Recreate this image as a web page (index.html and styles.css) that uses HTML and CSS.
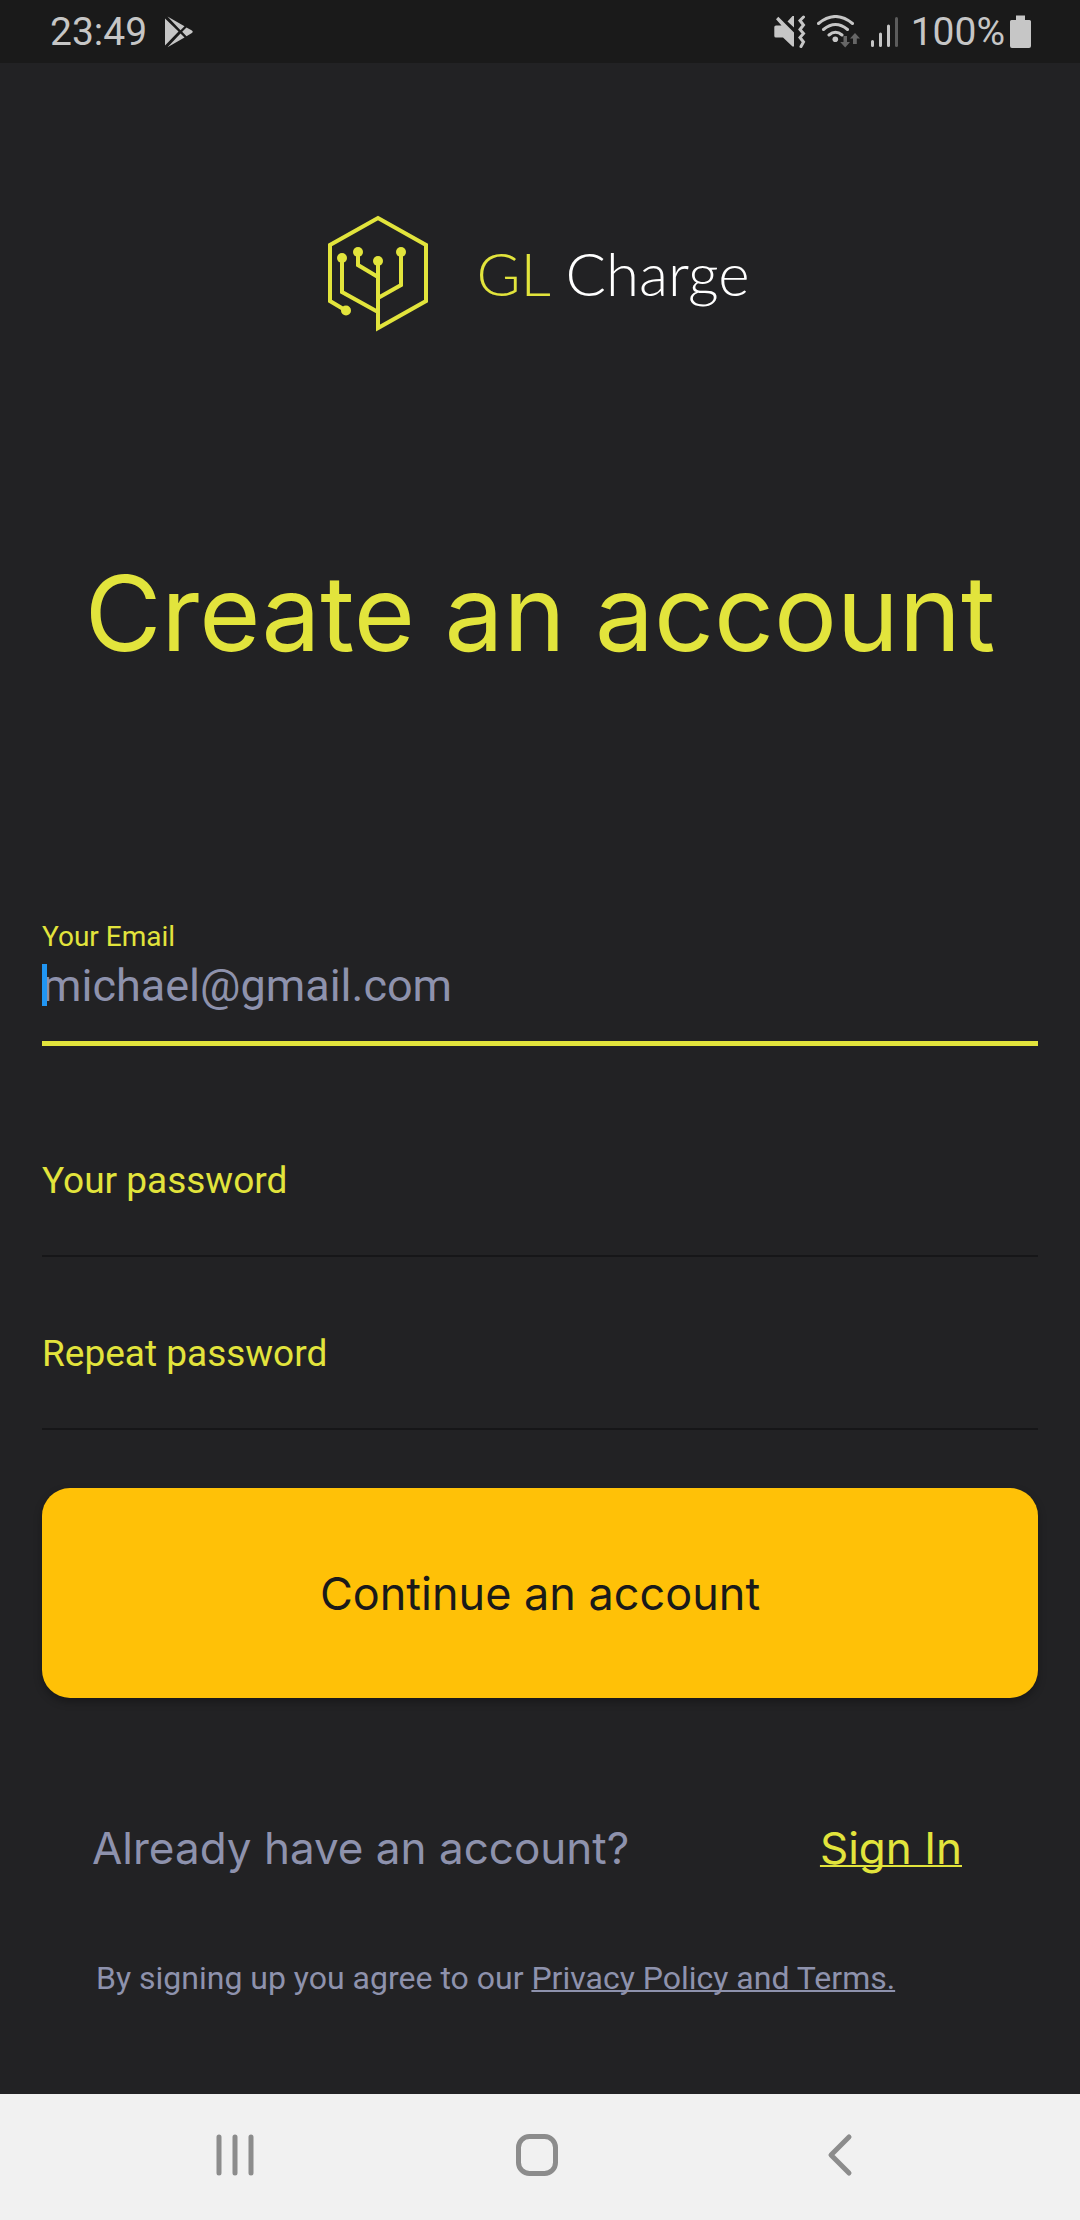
FILE: index.html
```html
<!DOCTYPE html>
<html lang="en">
<head>
<meta charset="utf-8">
<meta name="viewport" content="width=device-width, initial-scale=1">
<title>GL Charge – Create an account</title>
<link rel="stylesheet" href="styles.css">
</head>
<body>
<div class="screen">
  <header class="status">
    <div class="status-group status-left">
      <span>23:49</span>
      <svg class="play-icon" width="30" height="32" viewBox="164 15 30 32" aria-hidden="true">
        <path d="M165 17.500L178.500 30.500 165 44.500ZM167.500 15.500L184.500 25.200 180.500 29.200ZM180.500 32.500L184.500 36.500 167.500 46.200ZM186.500 26.500L191.500 29.200Q194 30.700 191.500 32.300L186.500 35.200 182.200 30.800Z"/>
      </svg>
    </div>
    <div class="status-group">
      <svg width="34" height="34" viewBox="771 14 34 34" aria-hidden="true">
        <path d="M772.300 26Q772.300 24.500 774 24.500H779.500L774 18.200 776.300 15.800 792 31.500V45.500H790.500L781 36.500H774Q772.300 36.500 772.300 35ZM785.500 20.500L790.500 15H792V26.500Z"/>
        <path class="line" stroke-width="3" d="M801.500 16L798 19.500 801.500 24 798 28.500 801.500 32.500 798 36.500 801.500 41 799 45.500"/>
      </svg>
      <svg class="wifi-icon" width="44" height="34" viewBox="815 13 44 34" aria-hidden="true">
        <path class="line" stroke-width="3" d="M816.500 21.500Q833.500 7.500 850.500 21.500M821.500 27.500Q833.500 17.500 845.500 27.500M827 33Q833.500 27.500 840 33"/>
        <circle cx="833.300" cy="37.200" r="2.800"/>
        <path class="dim" d="M841.500 34H845V40H848L843.200 45.500 838.200 40H841.500ZM851 42V36.500H848L853 31 858 36.500H854.800V42Z"/>
      </svg>
      <svg class="signal-icon" width="28" height="32" viewBox="869 14 28 32" aria-hidden="true">
        <path class="line" stroke-width="3" d="M870.500 39.500V43.500M878.500 32V43.500M886.500 24V43.500"/>
        <path class="line dim-line" stroke-width="3" d="M894.500 16.500V43.500"/>
      </svg>
      <span class="battery-text">100%</span>
      <svg width="22" height="34" viewBox="1010 14 22 34" aria-hidden="true">
        <path d="M1016 14.500H1025V19H1029.500Q1031 19 1031 20.500V45Q1031 47 1029 47H1012Q1010 47 1010 45V20.500Q1010 19 1011.500 19H1016Z"/>
      </svg>
    </div>
  </header>

  <main class="content">
    <div class="logo">
      <svg width="104" height="120" viewBox="326 213 104 120" aria-hidden="true">
        <path d="M378 261V328L426 301V245L378 218 330 245V301L345 310M342 258V292L378 312M358 252V265L378 277M401 252V285L378 298"/>
        <circle cx="346" cy="310.500" r="5"/>
        <circle cx="342" cy="258" r="5"/>
        <circle cx="358" cy="252" r="5"/>
        <circle cx="378" cy="261" r="5"/>
        <circle cx="401" cy="252" r="5"/>
      </svg>
      <span class="wordmark"><span class="accent">GL</span> Charge</span>
    </div>

    <h1>Create an account</h1>

    <form class="form">
      <div class="field field-active">
        <label for="email">Your Email</label>
        <input id="email" type="email" placeholder="michael@gmail.com">
        <span class="caret"></span>
      </div>
      <div class="field">
        <label for="password">Your password</label>
        <input id="password" type="password">
      </div>
      <div class="field">
        <label for="repeat">Repeat password</label>
        <input id="repeat" type="password">
      </div>
      <button class="submit" type="submit">Continue an account</button>
    </form>

    <div class="signin">
      <span>Already have an account?</span>
      <a href="#signin">Sign In</a>
    </div>
    <p class="terms">By signing up you agree to our <a href="#terms">Privacy Policy and Terms.</a></p>
  </main>

  <nav class="navbar">
    <button type="button" aria-label="Recent apps">
      <svg width="44" height="44" viewBox="0 0 44 44"><path d="M6 4V40M22 4V40M38 4V40"/></svg>
    </button>
    <button type="button" aria-label="Home">
      <svg width="44" height="44" viewBox="0 0 44 44"><rect x="3.500" y="3.500" width="37" height="37" rx="11"/></svg>
    </button>
    <button type="button" aria-label="Back">
      <svg width="44" height="44" viewBox="0 0 44 44"><path d="M32 4L14 22 32 40"/></svg>
    </button>
  </nav>
</div>
</body>
</html>
```
FILE: styles.css
```css
* {
  box-sizing: border-box;
}

body {
  margin: 0;
  background: #222224;
  color: #8e92ad;
  font-family: Roboto, sans-serif;
}

.screen {
  display: flex;
  flex-direction: column;
  min-height: 100vh;
}

/* Status bar */
.status {
  display: flex;
  justify-content: space-between;
  align-items: center;
  height: 63px;
  padding: 0 48px 0 50px;
  background: #1a1a1a;
  color: #c6c6c6;
  font-size: 39px;
  line-height: 48px;
}

.status-group {
  display: flex;
  align-items: center;
}

.status-left {
  gap: 17px;
}

.status svg {
  fill: #c6c6c6;
}

.status .line {
  fill: none;
  stroke: #c6c6c6;
  stroke-linecap: round;
}

.status .dim {
  fill: #666;
}

.status .dim-line {
  stroke: #5c5c5c;
}

.wifi-icon,
.signal-icon {
  margin-left: 10px;
}

.battery-text {
  margin: 0 5px 0 12px;
}

/* Page content */
.content {
  display: flex;
  flex: 1;
  flex-direction: column;
  padding: 150px 42px 0;
}

.logo {
  display: flex;
  justify-content: center;
  align-items: center;
  gap: 46px;
  padding-right: 4px;
}

.logo svg {
  fill: #e2e43c;
}

.logo path {
  fill: none;
  stroke: #e2e43c;
  stroke-width: 4;
}

.wordmark {
  color: #fff;
  font-family: Lato, sans-serif;
  font-size: 60px;
  font-weight: 300;
  line-height: 72px;
}

.accent {
  color: #e2e43c;
}

h1 {
  margin: 218px 0 0;
  color: #e2e43c;
  font-family: Inter, sans-serif;
  font-size: 105px;
  font-weight: 400;
  line-height: 124px;
  text-align: center;
}

.form {
  display: flex;
  flex-direction: column;
  margin-top: 244px;
}

.field {
  position: relative;
  display: grid;
  height: 173px;
  border-bottom: 2px solid #161618;
}

.field label {
  grid-area: 1 / 1;
  padding-top: 75px;
  color: #e2e43c;
  font-size: 37px;
  line-height: 44px;
}

.field input {
  grid-area: 1 / 1;
  width: 100%;
  padding: 60px 0 40px;
  border: 0;
  outline: 0;
  background: transparent;
  color: #8e92ad;
  font: 45px Roboto, sans-serif;
}

.field-active {
  height: 127px;
  margin-bottom: 38px;
  border-bottom: 5px solid #e2e43c;
}

.field-active label {
  padding-top: 0;
  font-size: 28px;
  line-height: 36px;
}

.field-active input {
  padding: 40px 0 32px;
}

.field-active input::placeholder {
  color: #8e92ad;
  opacity: 1;
}

.caret {
  position: absolute;
  top: 45px;
  left: 0;
  width: 5px;
  height: 42px;
  background: #2196f3;
}

.submit {
  height: 210px;
  margin-top: 58px;
  padding: 0;
  border: 0;
  border-radius: 28px;
  background: #ffc107;
  box-shadow: 0 4px 8px rgba(0, 0, 0, 0.3);
  color: #1a1a1a;
  font: 45px Inter, sans-serif;
}

.signin {
  display: flex;
  justify-content: space-between;
  margin-top: 122px;
  padding: 0 76px 0 50px;
  font-family: Inter, sans-serif;
  font-size: 44px;
  line-height: 56px;
}

.signin a {
  color: #e2e43c;
  text-decoration-thickness: 2px;
  text-decoration-skip-ink: none;
  text-underline-offset: 1px;
}

.terms {
  margin: 82px 0 0;
  padding: 0 54px;
  font-size: 32px;
  line-height: 40px;
}

.terms a {
  color: inherit;
  text-decoration-thickness: 2px;
  text-decoration-skip-ink: none;
}

/* System navigation */
.navbar {
  display: flex;
  height: 126px;
  padding: 0 90px 0 84px;
  background: #f1f1f1;
}

.navbar button {
  display: flex;
  flex: 1;
  justify-content: center;
  align-items: center;
  padding: 0 0 4px;
  border: 0;
  background: transparent;
}

.navbar svg {
  fill: none;
  stroke: #8c8c8c;
  stroke-width: 5;
  stroke-linecap: round;
  stroke-linejoin: round;
}
```
